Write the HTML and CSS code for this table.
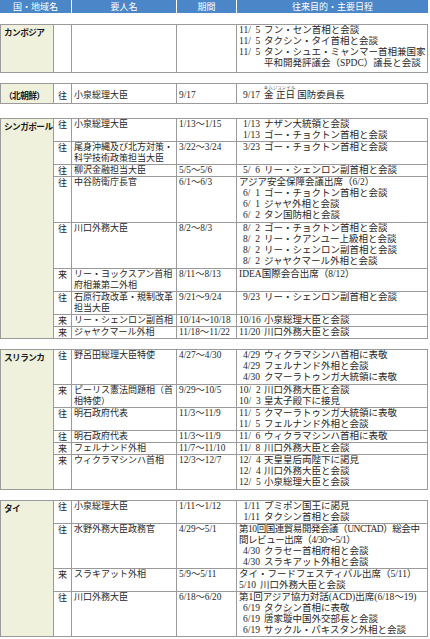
FILE: index.html
```html
<!DOCTYPE html>
<html lang="ja">
<head>
<meta charset="utf-8">
<title>要人往来</title>
<link rel="stylesheet" href="styles.css">
</head>
<body>
<div class="page">
  <div class="hdr">
    <div>国・地域名</div><div>要人名</div><div>期間</div><div>往来目的・主要日程</div>
  </div>

  <section class="grp first">
    <div class="ctry">カンボジア</div>
    <div class="rows">
      <div class="k"></div><div class="n"></div><div class="p"></div>
      <div class="s">
        <div class="ln"><span class="d">11/&#8199;5</span><span class="t">フン・セン首相と会談</span></div>
        <div class="ln"><span class="d">11/&#8199;5</span><span class="t">タクシン・タイ首相と会談</span></div>
        <div class="ln"><span class="d">11/&#8199;5</span><span class="t">タン・シュエ・ミャンマー首相兼国家平和開発評議会（SPDC）議長と会談</span></div>
      </div>
    </div>
  </section>

  <section class="grp tall">
    <div class="ctry">（北朝鮮）</div>
    <div class="rows">
      <div class="k">往</div><div class="n">小泉総理大臣</div><div class="p">9/17</div>
      <div class="s">
        <div class="ln"><span class="d">9/17</span><span class="t"><span class="rb">金 正日<span class="rt">キムジョンイル</span></span> 国防委員長</span></div>
      </div>
    </div>
  </section>

  <section class="grp after-tall">
    <div class="ctry">シンガポール</div>
    <div class="rows">
      <div class="k">往</div><div class="n">小泉総理大臣</div><div class="p">1/13～1/15</div>
      <div class="s">
        <div class="ln"><span class="d">1/13</span><span class="t">ナザン大統領と会談</span></div>
        <div class="ln"><span class="d">1/13</span><span class="t">ゴー・チョクトン首相と会談</span></div>
      </div>

      <div class="k">往</div><div class="n">尾身沖縄及び北方対策・科学技術政策担当大臣</div><div class="p">3/22～3/24</div>
      <div class="s">
        <div class="ln"><span class="d">3/23</span><span class="t">ゴー・チョクトン首相と会談</span></div>
      </div>

      <div class="k">往</div><div class="n">柳沢金融担当大臣</div><div class="p">5/5～5/6</div>
      <div class="s">
        <div class="ln"><span class="d">5/&#8199;6</span><span class="t">リー・シェンロン副首相と会談</span></div>
      </div>

      <div class="k">往</div><div class="n">中谷防衛庁長官</div><div class="p">6/1～6/3</div>
      <div class="s x1">
        <div class="ln">アジア安全保障会議出席（6/2）</div>
        <div class="ln"><span class="d">6/&#8199;1</span><span class="t">ゴー・チョクトン首相と会談</span></div>
        <div class="ln"><span class="d">6/&#8199;1</span><span class="t">ジャヤ外相と会談</span></div>
        <div class="ln"><span class="d">6/&#8199;2</span><span class="t">タン国防相と会談</span></div>
      </div>

      <div class="k">往</div><div class="n">川口外務大臣</div><div class="p">8/2～8/3</div>
      <div class="s x1">
        <div class="ln"><span class="d">8/&#8199;2</span><span class="t">ゴー・チョクトン首相と会談</span></div>
        <div class="ln"><span class="d">8/&#8199;2</span><span class="t">リー・クアンユー上級相と会談</span></div>
        <div class="ln"><span class="d">8/&#8199;2</span><span class="t">リー・シェンロン副首相と会談</span></div>
        <div class="ln"><span class="d">8/&#8199;2</span><span class="t">ジャヤクマール外相と会談</span></div>
      </div>

      <div class="k">来</div><div class="n">リー・ヨックスアン首相府相兼第二外相</div><div class="p">8/11～8/13</div>
      <div class="s">
        <div class="ln">IDEA国際会合出席（8/12）</div>
      </div>

      <div class="k">往</div><div class="n">石原行政改革・規制改革担当大臣</div><div class="p">9/21～9/24</div>
      <div class="s">
        <div class="ln"><span class="d">9/23</span><span class="t">リー・シェンロン副首相と会談</span></div>
      </div>

      <div class="k">来</div><div class="n">リー・シェンロン副首相</div><div class="p">10/14～10/18</div>
      <div class="s">
        <div class="ln"><span class="d">10/16</span><span class="t">小泉総理大臣と会談</span></div>
      </div>

      <div class="k">来</div><div class="n">ジャヤクマール外相</div><div class="p">11/18～11/22</div>
      <div class="s">
        <div class="ln"><span class="d">11/20</span><span class="t">川口外務大臣と会談</span></div>
      </div>
    </div>
  </section>

  <section class="grp">
    <div class="ctry">スリランカ</div>
    <div class="rows">
      <div class="k">往</div><div class="n">野呂田総理大臣特使</div><div class="p">4/27～4/30</div>
      <div class="s x1">
        <div class="ln"><span class="d">4/29</span><span class="t">ウィクラマシンハ首相に表敬</span></div>
        <div class="ln"><span class="d">4/29</span><span class="t">フェルナンド外相と会談</span></div>
        <div class="ln"><span class="d">4/30</span><span class="t">クマーラトゥンガ大統領に表敬</span></div>
      </div>

      <div class="k">来</div><div class="n">ピーリス憲法問題相（首相特使）</div><div class="p">9/29～10/5</div>
      <div class="s">
        <div class="ln"><span class="d">10/&#8199;2</span><span class="t">川口外務大臣と会談</span></div>
        <div class="ln"><span class="d">10/&#8199;3</span><span class="t">皇太子殿下に接見</span></div>
      </div>

      <div class="k">往</div><div class="n">明石政府代表</div><div class="p">11/3～11/9</div>
      <div class="s">
        <div class="ln"><span class="d">11/&#8199;5</span><span class="t">クマーラトゥンガ大統領に表敬</span></div>
        <div class="ln"><span class="d">11/&#8199;5</span><span class="t">フェルナンド外相と会談</span></div>
      </div>

      <div class="k">往</div><div class="n">明石政府代表</div><div class="p">11/3～11/9</div>
      <div class="s">
        <div class="ln"><span class="d">11/&#8199;6</span><span class="t">ウィクラマシンハ首相に表敬</span></div>
      </div>

      <div class="k">来</div><div class="n">フェルナンド外相</div><div class="p">11/7～11/10</div>
      <div class="s">
        <div class="ln"><span class="d">11/&#8199;8</span><span class="t">川口外務大臣と会談</span></div>
      </div>

      <div class="k">来</div><div class="n">ウィクラマシンハ首相</div><div class="p">12/3～12/7</div>
      <div class="s x1">
        <div class="ln"><span class="d">12/&#8199;4</span><span class="t">天皇皇后両陛下に謁見</span></div>
        <div class="ln"><span class="d">12/&#8199;4</span><span class="t">川口外務大臣と会談</span></div>
        <div class="ln"><span class="d">12/&#8199;5</span><span class="t">小泉総理大臣と会談</span></div>
      </div>
    </div>
  </section>

  <section class="grp">
    <div class="ctry">タイ</div>
    <div class="rows">
      <div class="k">往</div><div class="n">小泉総理大臣</div><div class="p">1/11～1/12</div>
      <div class="s">
        <div class="ln"><span class="d">1/11</span><span class="t">プミポン国王に謁見</span></div>
        <div class="ln"><span class="d">1/11</span><span class="t">タクシン首相と会談</span></div>
      </div>

      <div class="k">往</div><div class="n">水野外務大臣政務官</div><div class="p">4/29～5/1</div>
      <div class="s">
        <div class="ln cond">第10回国連貿易開発会議（UNCTAD）総会中<br>間レビュー出席（4/30～5/1）</div>
        <div class="ln"><span class="d">4/30</span><span class="t">クラセー首相府相と会談</span></div>
        <div class="ln"><span class="d">4/30</span><span class="t">スラキアット外相と会談</span></div>
      </div>

      <div class="k">来</div><div class="n">スラキアット外相</div><div class="p">5/9～5/11</div>
      <div class="s">
        <div class="ln">タイ・フードフェスティバル出席（5/11）</div>
        <div class="ln tight"><span class="d">5/10</span><span class="t">川口外務大臣と会談</span></div>
      </div>

      <div class="k">往</div><div class="n">川口外務大臣</div><div class="p">6/18～6/20</div>
      <div class="s">
        <div class="ln">第1回アジア協力対話(ACD)出席(6/18～19)</div>
        <div class="ln"><span class="d">6/19</span><span class="t">タクシン首相に表敬</span></div>
        <div class="ln"><span class="d">6/19</span><span class="t"><span class="rb">唐<span class="rt">とう</span></span>家<span class="rb">璇<span class="rt">せん</span></span>中国外交部長と会談</span></div>
        <div class="ln"><span class="d">6/19</span><span class="t">サックル・パキスタン外相と会談</span></div>
      </div>
    </div>
  </section>
</div>
</body>
</html>
```

FILE: styles.css
```css
html, body {
  margin: 0;
  padding: 0;
  background: #ffffff;
}

body {
  color: #262626;
  font-family: "Liberation Serif", "Noto Sans CJK JP", serif;
  font-size: 9px;
  line-height: 11px;
}

.page {
  width: 428px;
}

.hdr {
  display: grid;
  grid-template-columns: 71px 104px 59px 191px;
  column-gap: 1px;
  background: #ffffff;
}

.hdr > div {
  background: #4a86c8;
  color: #ffffff;
  font-family: "Noto Sans CJK JP", sans-serif;
  font-size: 9px;
  line-height: 13px;
  text-align: center;
}

.grp {
  display: flex;
  gap: 1px;
  background: #9a9a9a;
  border: 1px solid #9a9a9a;
  margin-top: 10px;
}

.grp.first {
  margin-top: 11px;
}

.grp.first .rows > div {
  padding-bottom: 3px;
}

.grp.after-tall {
  margin-top: 14px;
}

.ctry {
  width: 52px;
  flex: none;
  box-sizing: border-box;
  padding: 2px 0 0 3px;
  background: #f0f1dc;
  color: #1a1a1a;
  font-family: "Noto Sans CJK JP", sans-serif;
  font-weight: 700;
  font-size: 8.7px;
  letter-spacing: -0.6px;
  white-space: nowrap;
  overflow: hidden;
}

.rows {
  flex: 1;
  display: grid;
  grid-template-columns: 17px 104px 59px 190px;
  gap: 1px;
}

.rows > div {
  background: #ffffff;
}

.k {
  text-align: center;
  font-family: "Noto Sans CJK JP", sans-serif;
}

.n {
  padding-left: 2px;
}

.p {
  padding-left: 2px;
  font-size: 9.3px;
  white-space: nowrap;
}

.s {
  padding-left: 2px;
  font-size: 9.5px;
}

.s.x1 {
  padding-bottom: 1px;
}

.tall .rows > div,
.tall .ctry {
  padding-top: 6px;
  padding-bottom: 2px;
}

.ln {
  display: flex;
}

.ln.cond {
  display: block;
  letter-spacing: -0.45px;
}

.d {
  flex: none;
  width: 21px;
  margin-right: 4px;
  text-align: right;
  white-space: nowrap;
}

.tight .d {
  width: 17px;
  margin-right: 4px;
}

.t {
  flex: 1;
  min-width: 0;
}

.rb {
  position: relative;
  display: inline-block;
}

.rt {
  position: absolute;
  left: -4px;
  right: -4px;
  top: -5px;
  font-family: "Noto Sans CJK JP", sans-serif;
  font-size: 4.5px;
  line-height: 5px;
  text-align: center;
  white-space: nowrap;
  color: #444444;
  letter-spacing: 0;
}
```
